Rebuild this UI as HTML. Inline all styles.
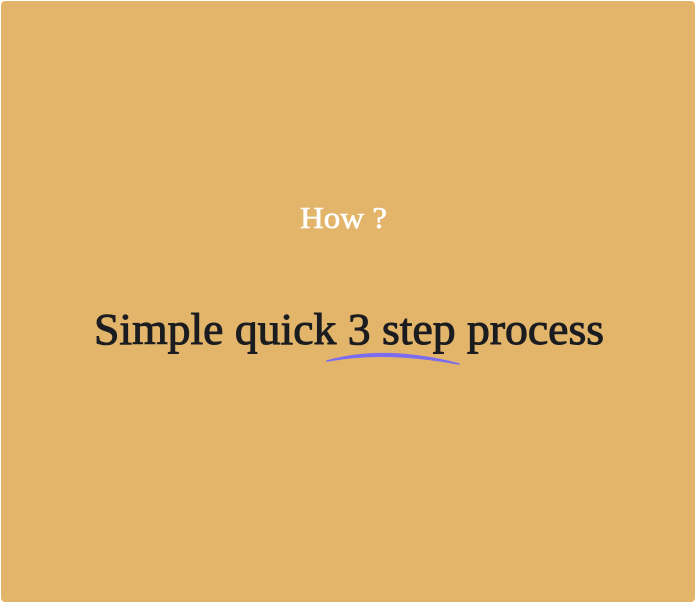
<!DOCTYPE html>
<html><head><meta charset="utf-8"><style>
html,body{margin:0;padding:0;background:#fff;width:697px;height:604px;overflow:hidden}
.card{position:absolute;left:1px;top:1px;width:694px;height:601px;background:#e2b56a;border-radius:4px}
svg{position:absolute;left:0;top:0}
</style></head><body>
<div class="card"></div>
<svg width="697" height="604" viewBox="0 0 697 604">
<text x="343.5" y="228" text-anchor="middle" font-family="Liberation Serif, serif" font-size="31" fill="#fff" stroke="#fff" stroke-width="0.6" textLength="87" lengthAdjust="spacingAndGlyphs">How ?</text>
<text x="349" y="344" text-anchor="middle" font-family="Liberation Serif, serif" font-size="44" fill="#1b1c20" stroke="#1b1c20" stroke-width="1" textLength="510" lengthAdjust="spacingAndGlyphs">Simple quick 3 step process</text>
<path d="M327 361 Q385 345 459 364 Q385 350 327 361 Z" fill="#7b6cf0" stroke="#7b6cf0" stroke-width="1.6" stroke-linejoin="round"/>
</svg>
</body></html>
